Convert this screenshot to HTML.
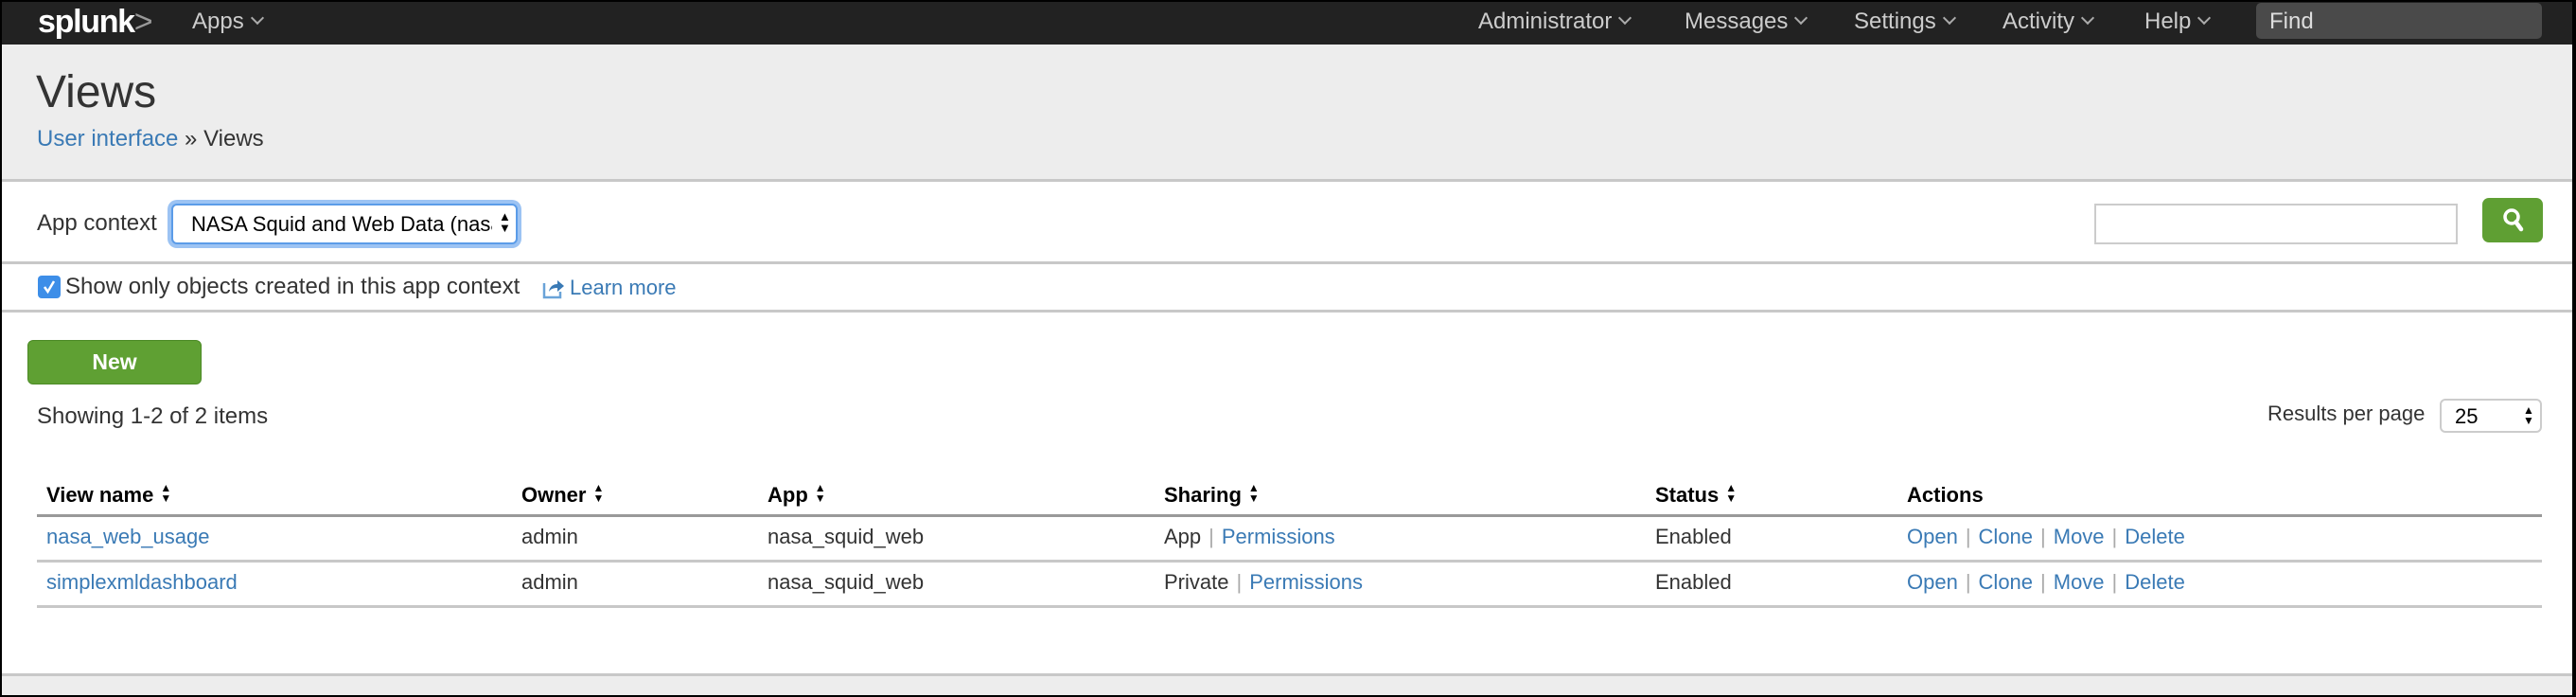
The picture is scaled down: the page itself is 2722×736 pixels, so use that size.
<!DOCTYPE html>
<html><head><meta charset="utf-8"><style>
*{margin:0;padding:0;box-sizing:border-box}
body{width:2722px;height:736px;overflow:hidden;background:#000;font-family:"Liberation Sans",Arial,sans-serif;color:#333;font-size:22px}
#pg{position:absolute;left:2px;top:2px;width:2716px;height:732px;background:#fff;overflow:hidden}
.a{position:absolute;white-space:nowrap}
.lk{color:#3a7ab5}
.nav{color:#ccc;font-size:24px;top:7px}
.chev{display:inline-block;width:10px;height:10px;border-right:2px solid #aaa;border-bottom:2px solid #aaa;transform:rotate(45deg);margin-left:9px;position:relative;top:-6px}
.hd{font-weight:bold;color:#000;top:508px}
.sort{display:inline-block;margin-left:7px;vertical-align:middle;position:relative;top:-3px;font-size:12px;line-height:11px}
.r1{top:552px}.r2{top:600px}
.sep{color:#aaa;margin:0 8px}
.line{position:absolute;left:37px;width:2647px;height:3px;background:#c8c8c8}
</style></head><body><div id="pg">
<div class="a" style="left:-2px;top:-2px;width:2722px;height:47px;background:#222"></div>
<div class="a" style="left:38px;top:2px;font-size:34px;font-weight:bold;color:#fff;letter-spacing:-1.3px">splunk<span style="color:#999;font-weight:normal;letter-spacing:0">&gt;</span></div>
<div class="a nav" style="left:201px">Apps<span class="chev"></span></div>
<div class="a nav" style="left:1560px">Administrator<span class="chev"></span></div>
<div class="a nav" style="left:1778px">Messages<span class="chev"></span></div>
<div class="a nav" style="left:1957px">Settings<span class="chev"></span></div>
<div class="a nav" style="left:2114px">Activity<span class="chev"></span></div>
<div class="a nav" style="left:2264px">Help<span class="chev"></span></div>
<div class="a" style="left:2382px;top:1px;width:302px;height:38px;background:#4a4a4a;border-radius:5px;color:#ddd;font-size:24px;padding:6px 14px">Find</div>

<div class="a" style="left:0;top:45px;width:2716px;height:145px;background:#ededed;border-bottom:3px solid #c8c8c8"></div>
<div class="a" style="left:36px;top:68px;font-size:48px;color:#333;font-weight:300">Views</div>
<div class="a" style="left:37px;top:131px;font-size:24px"><span class="lk">User interface</span> » Views</div>

<div class="a" style="left:37px;top:220px;font-size:24px">App context</div>
<div class="a" style="left:179px;top:213px;width:366px;height:43px;border-radius:6px;box-shadow:0 0 0 4px #9cc3f3;border:2px solid #5b9ce8;background:#fff;"></div>
<div class="a" style="left:200px;top:222px;width:318px;overflow:hidden;font-size:22px;color:#000">NASA Squid and Web Data (nasa_squid_web)</div>
<div class="a" style="left:525px;top:221px;font-size:13px;line-height:12px;color:#000">▲<br>▼</div>
<div class="a" style="left:2211px;top:213px;width:384px;height:43px;border:2px solid #ccc;background:#fff"></div>
<div class="a" style="left:2621px;top:207px;width:64px;height:47px;border-radius:7px;background:#5f9f33"></div>
<svg class="a" style="left:2637px;top:214px" width="34" height="34" viewBox="0 0 34 34"><circle cx="15" cy="13" r="7" fill="none" stroke="#fff" stroke-width="3.5"/><line x1="19.5" y1="18.5" x2="25" y2="26" stroke="#fff" stroke-width="4.5" stroke-linecap="round"/></svg>
<div class="a" style="left:0;top:274px;width:2716px;height:3px;background:#c8c8c8"></div>

<div class="a" style="left:38px;top:289px;width:24px;height:24px;border-radius:4px;background:#3d8ee8"></div>
<svg class="a" style="left:38px;top:289px" width="24" height="24"><path d="M7 12 L10.5 17 L17 6" fill="none" stroke="#fff" stroke-width="2.5"/></svg>
<div class="a" style="left:67px;top:287px;font-size:24px">Show only objects created in this app context</div>
<svg class="a" style="left:570px;top:289px" width="26" height="26" viewBox="0 0 26 26"><path d="M3 8 V23 H20 V17" fill="none" stroke="#6aa3d8" stroke-width="2.5"/><path d="M8 17 C9 11 13 9 17 9 V5 L24 11 L17 17 V13 C13 13 10 14 8 17Z" fill="#3a7ab5"/></svg>
<div class="a lk" style="left:600px;top:289px;font-size:22px">Learn more</div>
<div class="a" style="left:0;top:325px;width:2716px;height:3px;background:#c8c8c8"></div>

<div class="a" style="left:27px;top:357px;width:184px;height:47px;border-radius:6px;background:#5fa033;border:1px solid #4b8a25;color:#fff;font-weight:bold;font-size:23px;text-align:center;line-height:44px">New</div>
<div class="a" style="left:37px;top:424px;font-size:24px">Showing 1-2 of 2 items</div>
<div class="a" style="left:2394px;top:422px">Results per page</div>
<div class="a" style="left:2576px;top:419px;width:108px;height:36px;border:2px solid #ccc;border-radius:6px;padding:4px 0 0 14px;color:#000">25</div>
<div class="a" style="left:2664px;top:426px;font-size:12px;line-height:11px;color:#000">▲<br>▼</div>

<div class="a hd" style="left:47px">View name<span class="sort">▲<br>▼</span></div>
<div class="a hd" style="left:549px">Owner<span class="sort">▲<br>▼</span></div>
<div class="a hd" style="left:809px">App<span class="sort">▲<br>▼</span></div>
<div class="a hd" style="left:1228px">Sharing<span class="sort">▲<br>▼</span></div>
<div class="a hd" style="left:1747px">Status<span class="sort">▲<br>▼</span></div>
<div class="a hd" style="left:2013px">Actions</div>
<div class="line" style="top:541px;background:#999"></div>

<div class="a r1 lk" style="left:47px">nasa_web_usage</div>
<div class="a r1" style="left:549px">admin</div>
<div class="a r1" style="left:809px">nasa_squid_web</div>
<div class="a r1" style="left:1228px">App<span class="sep">|</span><span class="lk">Permissions</span></div>
<div class="a r1" style="left:1747px">Enabled</div>
<div class="a r1 lk" style="left:2013px">Open<span class="sep">|</span>Clone<span class="sep">|</span>Move<span class="sep">|</span>Delete</div>
<div class="line" style="top:589px"></div>

<div class="a r2 lk" style="left:47px">simplexmldashboard</div>
<div class="a r2" style="left:549px">admin</div>
<div class="a r2" style="left:809px">nasa_squid_web</div>
<div class="a r2" style="left:1228px">Private<span class="sep">|</span><span class="lk">Permissions</span></div>
<div class="a r2" style="left:1747px">Enabled</div>
<div class="a r2 lk" style="left:2013px">Open<span class="sep">|</span>Clone<span class="sep">|</span>Move<span class="sep">|</span>Delete</div>
<div class="line" style="top:637px"></div>

<div class="a" style="left:0;top:709px;width:2716px;height:30px;background:#ededed;border-top:3px solid #c8c8c8"></div>
</div></body></html>
